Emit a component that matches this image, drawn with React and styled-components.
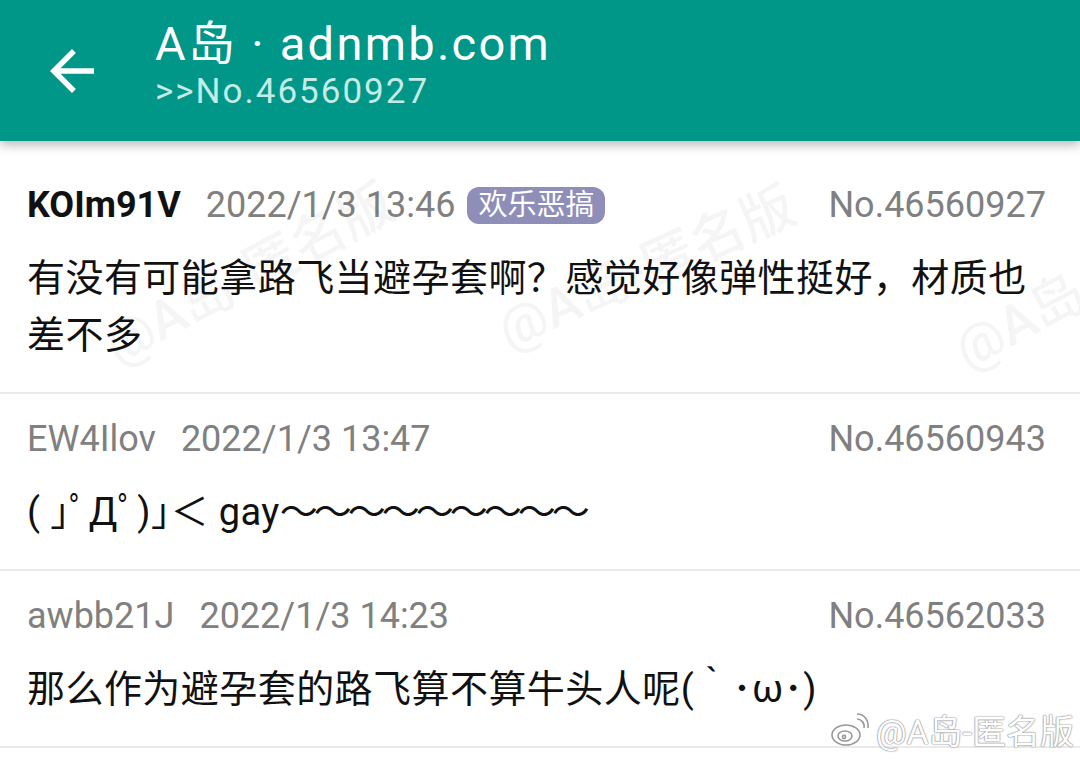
import React from 'react'
import styled, { createGlobalStyle } from 'styled-components'

const GlobalStyle = createGlobalStyle`
  html, body {
    margin: 0;
    padding: 0;
    background: #ffffff;
  }
  body {
    font-family: Roboto, "Noto Sans CJK SC", sans-serif;
    overflow: hidden;
  }
`

const Page = styled.div`
  width: 1080px;
  height: 762px;
  position: relative;
  overflow: hidden;
  background: #fff;
`

const AppBar = styled.header`
  height: 141px;
  background: #009688;
  display: flex;
  align-items: center;
  box-shadow: 0 4px 10px rgba(0, 0, 0, 0.28);
  position: relative;
  z-index: 2;
`

const BackButton = styled.div`
  width: 66px;
  height: 66px;
  margin-left: 39px;
  margin-right: 50px;
  display: flex;
  align-items: center;
  justify-content: center;
  svg {
    display: block;
  }
`

const TitleBlock = styled.div`
  display: flex;
  flex-direction: column;
  margin-top: -12px;
`

const Title = styled.div`
  color: #fff;
  font-size: 47px;
  line-height: 54px;
  letter-spacing: 2.3px;
`

const Subtitle = styled.div`
  color: #c4ebe6;
  font-size: 35px;
  line-height: 42px;
  letter-spacing: 2px;
`

const List = styled.div`
  padding-top: 19px;
`

const Card = styled.div`
  padding: 20px 34px 28px 27px;
  border-bottom: 2px solid #eaeaea;
  background: #fff;
`

const Meta = styled.div`
  display: flex;
  align-items: center;
  height: 50px;
  font-size: 36px;
  color: #808080;
`

const Name = styled.span`
  color: ${p => (p.$po ? '#111' : '#808080')};
  font-weight: ${p => (p.$po ? 700 : 400)};
  margin-right: 25px;
`

const Time = styled.span`
  color: #808080;
`

const Tag = styled.span`
  margin-left: 12px;
  background: #8e8eb8;
  color: #fff;
  font-size: 29px;
  line-height: 37px;
  height: 37px;
  padding: 0 11px;
  border-radius: 12px;
`

const No = styled.span`
  margin-left: auto;
  color: #808080;
`

const Body = styled.div`
  margin-top: 20px;
  font-size: 38px;
  line-height: 57px;
  letter-spacing: 0.45px;
  color: #111;
  word-break: break-all;
`

const Waves = styled.span`
  letter-spacing: -4px;
`

const WatermarkLayer = styled.div`
  position: absolute;
  inset: 0;
  pointer-events: none;
  z-index: 1;
`

const Watermark = styled.div`
  position: absolute;
  font-size: 54px;
  font-weight: 500;
  color: rgba(0, 0, 0, 0.04);
  white-space: nowrap;
  transform: rotate(${p => p.$angle || -28}deg);
  transform-origin: left bottom;
`

const WeiboMark = styled.div`
  position: absolute;
  right: 6px;
  bottom: 8px;
  display: flex;
  align-items: center;
  gap: 6px;
  font-size: 34px;
  color: #fff;
  text-shadow: 0 0 1px #888, 0 0 1px #888, 0 0 2px #aaa;
  z-index: 3;
`

const posts = [
  {
    name: 'KOIm91V',
    po: true,
    time: '2022/1/3 13:46',
    tag: '欢乐恶搞',
    no: 'No.46560927',
    body: '有没有可能拿路飞当避孕套啊？感觉好像弹性挺好，材质也差不多',
  },
  {
    name: 'EW4Ilov',
    time: '2022/1/3 13:47',
    no: 'No.46560943',
    body: (
      <>
        ( ｣ﾟДﾟ)｣＜ gay<Waves>～～～～～～～～～</Waves>
      </>
    ),
  },
  {
    name: 'awbb21J',
    time: '2022/1/3 14:23',
    no: 'No.46562033',
    body: '那么作为避孕套的路飞算不算牛头人呢(｀･ω･)',
  },
]

const ArrowBack = () => (
  <svg width="66" height="66" viewBox="0 0 24 24" fill="#fff">
    <path d="M20 11H7.83l5.59-5.59L12 4l-8 8 8 8 1.41-1.41L7.83 13H20v-2z" />
  </svg>
)

const WeiboLogo = () => (
  <svg width="40" height="34" viewBox="0 0 40 34" fill="none" stroke="#999" strokeWidth="1.6">
    <ellipse cx="16" cy="22" rx="14" ry="10" fill="#fff" />
    <ellipse cx="15" cy="23" rx="7" ry="5" fill="#fff" />
    <circle cx="14" cy="24" r="1.6" />
    <path d="M27 6c4 0 8 4 7 9" />
    <path d="M27 1c7 0 12 6 11 14" />
  </svg>
)

const App = () => {
  return (
    <Page>
      <GlobalStyle />
      <AppBar>
        <BackButton>
          <ArrowBack />
        </BackButton>
        <TitleBlock>
          <Title>A岛 · adnmb.com</Title>
          <Subtitle>&gt;&gt;No.46560927</Subtitle>
        </TitleBlock>
      </AppBar>
      <List>
        {posts.map(p => (
          <Card key={p.no}>
            <Meta>
              <Name $po={p.po}>{p.name}</Name>
              <Time>{p.time}</Time>
              {p.tag && <Tag>{p.tag}</Tag>}
              <No>{p.no}</No>
            </Meta>
            <Body>{p.body}</Body>
          </Card>
        ))}
      </List>
      <WatermarkLayer>
        <Watermark style={{ left: 125, top: 300 }}>@A岛-匿名版</Watermark>
        <Watermark $angle={-24} style={{ left: 515, top: 285 }}>@A岛-匿名版</Watermark>
        <Watermark style={{ left: 975, top: 305 }}>@A岛-匿名版</Watermark>
      </WatermarkLayer>
      <WeiboMark>
        <WeiboLogo />
        @A岛-匿名版
      </WeiboMark>
    </Page>
  )
}

export default App
